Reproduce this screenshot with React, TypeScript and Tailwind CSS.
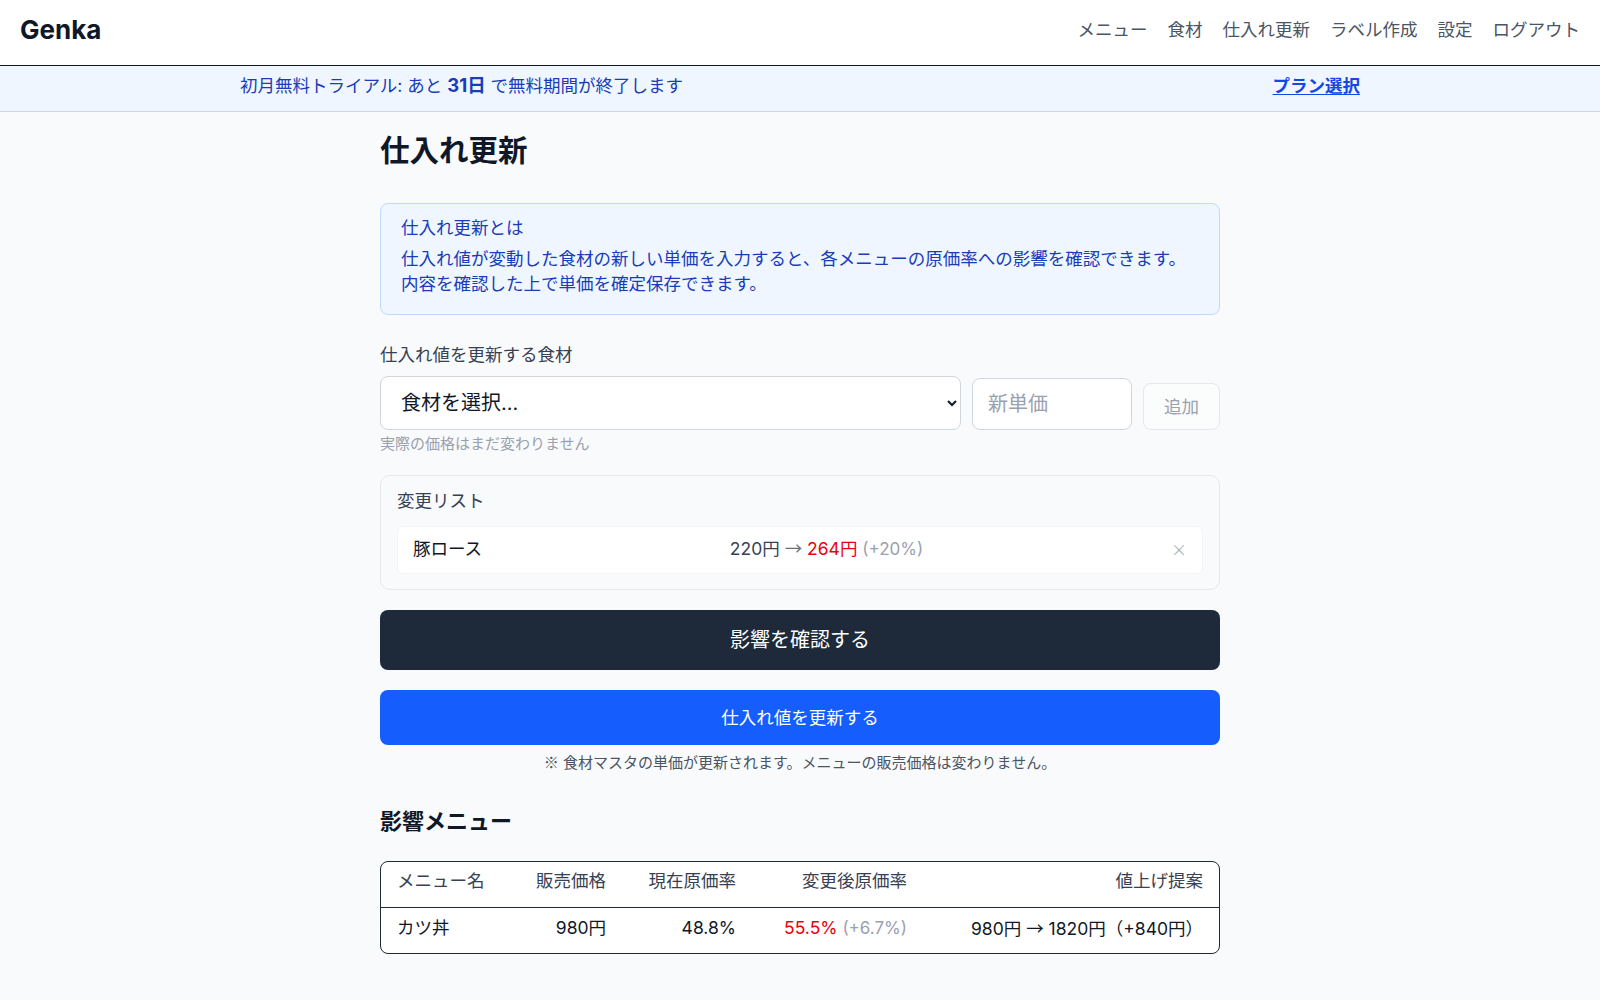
import React, { useState } from 'react';

interface Change {
    id: string;
    name: string;
    oldPrice: number;
    newPrice: number;
}

interface ImpactRow {
    name: string;
    price: number;
    currentRate: string;
    newRate: string;
    diff: string;
    suggestFrom: number;
    suggestTo: number;
}

const navItems = ['メニュー', '食材', '仕入れ更新', 'ラベル作成', '設定', 'ログアウト'];

const impacts: ImpactRow[] = [
    {
        name: 'カツ丼',
        price: 980,
        currentRate: '48.8%',
        newRate: '55.5%',
        diff: '(+6.7%)',
        suggestFrom: 980,
        suggestTo: 1820,
    },
];

// arrows and ※ look better in the JP font
const Jp: React.FC<{ children: React.ReactNode; className?: string }> = ({ children, className = '' }) => (
    <span className={`font-['Noto_Sans_CJK_JP',sans-serif] ${className}`}>{children}</span>
);

const Header: React.FC = () => (
    <header className="h-[66px] bg-white border-b border-gray-900 flex items-center justify-between px-5 pb-[6px]">
        <div className="text-[26px] font-bold text-gray-900">Genka</div>
        <nav className="flex items-center gap-[20px] text-[17.5px] text-gray-600">
            {navItems.map(item => (
                <a key={item} href="#" className="hover:text-gray-900">
                    {item}
                </a>
            ))}
        </nav>
    </header>
);

const TrialBanner: React.FC = () => (
    <div className="h-[46px] bg-blue-50 border-b border-blue-200 pb-[6px]">
        <div className="max-w-[1120px] h-full mx-auto flex items-center justify-between text-[17.5px] text-blue-800">
            <p>
                初月無料トライアル: あと <span className="font-bold text-[18.5px]">31日</span> で無料期間が終了します
            </p>
            <a href="#" className="font-bold text-blue-700 underline underline-offset-2">
                プラン選択
            </a>
        </div>
    </div>
);

const App: React.FC = () => {
    const [changes, setChanges] = useState<Change[]>([
        { id: '1', name: '豚ロース', oldPrice: 220, newPrice: 264 },
    ]);
    const [newPrice, setNewPrice] = useState('');

    const removeChange = (id: string) => {
        setChanges(prev => prev.filter(c => c.id !== id));
    };

    return (
        <div className="min-h-screen bg-gray-50 text-gray-900 font-['Inter','Noto_Sans_CJK_JP',sans-serif] text-[17.5px] leading-[26px]">
            <Header />
            <TrialBanner />

            <main className="max-w-[840px] mx-auto pt-[20px] pb-[40px]">
                <h1 className="text-[29.5px] leading-[37px] font-bold text-gray-900">仕入れ更新</h1>

                <div className="mt-[34px] rounded-lg border border-blue-200 bg-blue-50 px-5 pt-[11px] pb-[18px] text-blue-800">
                    <p className="leading-[26px]">仕入れ更新とは</p>
                    <p className="mt-[5px] leading-[25px]">
                        仕入れ値が変動した食材の新しい単価を入力すると、各メニューの原価率への影響を確認できます。
                        <br />
                        内容を確認した上で単価を確定保存できます。
                    </p>
                </div>

                <label className="block mt-[27px] text-gray-700">仕入れ値を更新する食材</label>
                <div className="mt-[8px] flex items-end gap-[11px]">
                    <select
                        defaultValue=""
                        className="flex-1 h-[54px] rounded-lg border border-gray-300 bg-white pl-[16px] pr-[8px] text-[20px] text-gray-900"
                    >
                        <option value="">食材を選択...</option>
                        <option value="pork">豚ロース</option>
                    </select>
                    <input
                        type="number"
                        value={newPrice}
                        onChange={e => setNewPrice(e.target.value)}
                        placeholder="新単価"
                        className="w-[160px] h-[52px] rounded-lg border border-gray-300 bg-white px-[15px] text-[20px] placeholder:text-gray-400 focus:outline-none"
                    />
                    <button
                        disabled
                        className="w-[77px] h-[47px] rounded-lg border border-gray-200 bg-white/40 text-gray-400"
                    >
                        追加
                    </button>
                </div>
                <p className="mt-[3px] text-[15px] leading-[22px] text-gray-400">実際の価格はまだ変わりません</p>

                <div className="mt-[20px] rounded-[10px] border border-gray-200 bg-gray-50 px-4 pt-[12px] pb-[15px]">
                    <p className="text-gray-700">変更リスト</p>
                    <ul className="mt-[12px] space-y-2">
                        {changes.map(c => {
                            const pct = Math.round(((c.newPrice - c.oldPrice) / c.oldPrice) * 100);
                            return (
                                <li
                                    key={c.id}
                                    className="h-[48px] flex items-center justify-between rounded-md border border-gray-100 bg-white pl-[15px] pr-[15px] pb-[3px]"
                                >
                                    <span className="text-gray-900">{c.name}</span>
                                    <span className="text-gray-700">
                                        {c.oldPrice}円 <Jp className="text-gray-500">→</Jp>{' '}
                                        <span className="text-red-600">{c.newPrice}円</span>{' '}
                                        <span className="text-[17px] text-gray-400">(+{pct}%)</span>
                                    </span>
                                    <button
                                        onClick={() => removeChange(c.id)}
                                        className="font-['Noto_Sans_CJK_JP',sans-serif] text-[16px] font-light text-gray-400 hover:text-gray-600"
                                    >
                                        ×
                                    </button>
                                </li>
                            );
                        })}
                    </ul>
                </div>

                <button className="mt-[20px] w-full h-[60px] rounded-lg bg-gray-800 text-white text-[20px]">
                    影響を確認する
                </button>
                <button className="mt-[20px] w-full h-[55px] rounded-lg bg-blue-600 text-white">
                    仕入れ値を更新する
                </button>
                <p className="mt-[6px] text-center text-[15px] leading-[22px] text-gray-600">
                    <Jp>※</Jp> 食材マスタの単価が更新されます。メニューの販売価格は変わりません。
                </p>

                <h2 className="mt-[32px] text-[22px] leading-[30px] font-bold text-gray-900">影響メニュー</h2>
                <div className="mt-[25px] rounded-lg border border-gray-800 bg-white overflow-hidden">
                    <table className="w-full border-collapse">
                        <thead>
                            <tr className="h-[45px] border-b border-gray-800 text-gray-700">
                                <th className="w-[122px] px-4 pb-[7px] text-left font-normal">メニュー名</th>
                                <th className="w-[119px] px-4 pb-[7px] text-right font-normal">販売価格</th>
                                <th className="w-[130px] px-4 pb-[7px] text-right font-normal">現在原価率</th>
                                <th className="w-[171px] px-4 pb-[7px] text-right font-normal">変更後原価率</th>
                                <th className="px-4 pb-[7px] text-right font-normal">値上げ提案</th>
                            </tr>
                        </thead>
                        <tbody>
                            {impacts.map(row => (
                                <tr key={row.name} className="h-[46px]">
                                    <td className="px-4 pb-[4px] text-left">{row.name}</td>
                                    <td className="px-4 pb-[4px] text-right">{row.price}円</td>
                                    <td className="px-4 pb-[4px] text-right">{row.currentRate}</td>
                                    <td className="px-4 pb-[4px] text-right">
                                        <span className="text-red-600">{row.newRate}</span>{' '}
                                        <span className="text-[17px] text-gray-400">{row.diff}</span>
                                    </td>
                                    <td className="px-4 pb-[4px] text-right">
                                        {row.suggestFrom}円 <Jp>→</Jp> {row.suggestTo}円（+{row.suggestTo - row.suggestFrom}円）
                                    </td>
                                </tr>
                            ))}
                        </tbody>
                    </table>
                </div>
            </main>
        </div>
    );
};

export default App;
